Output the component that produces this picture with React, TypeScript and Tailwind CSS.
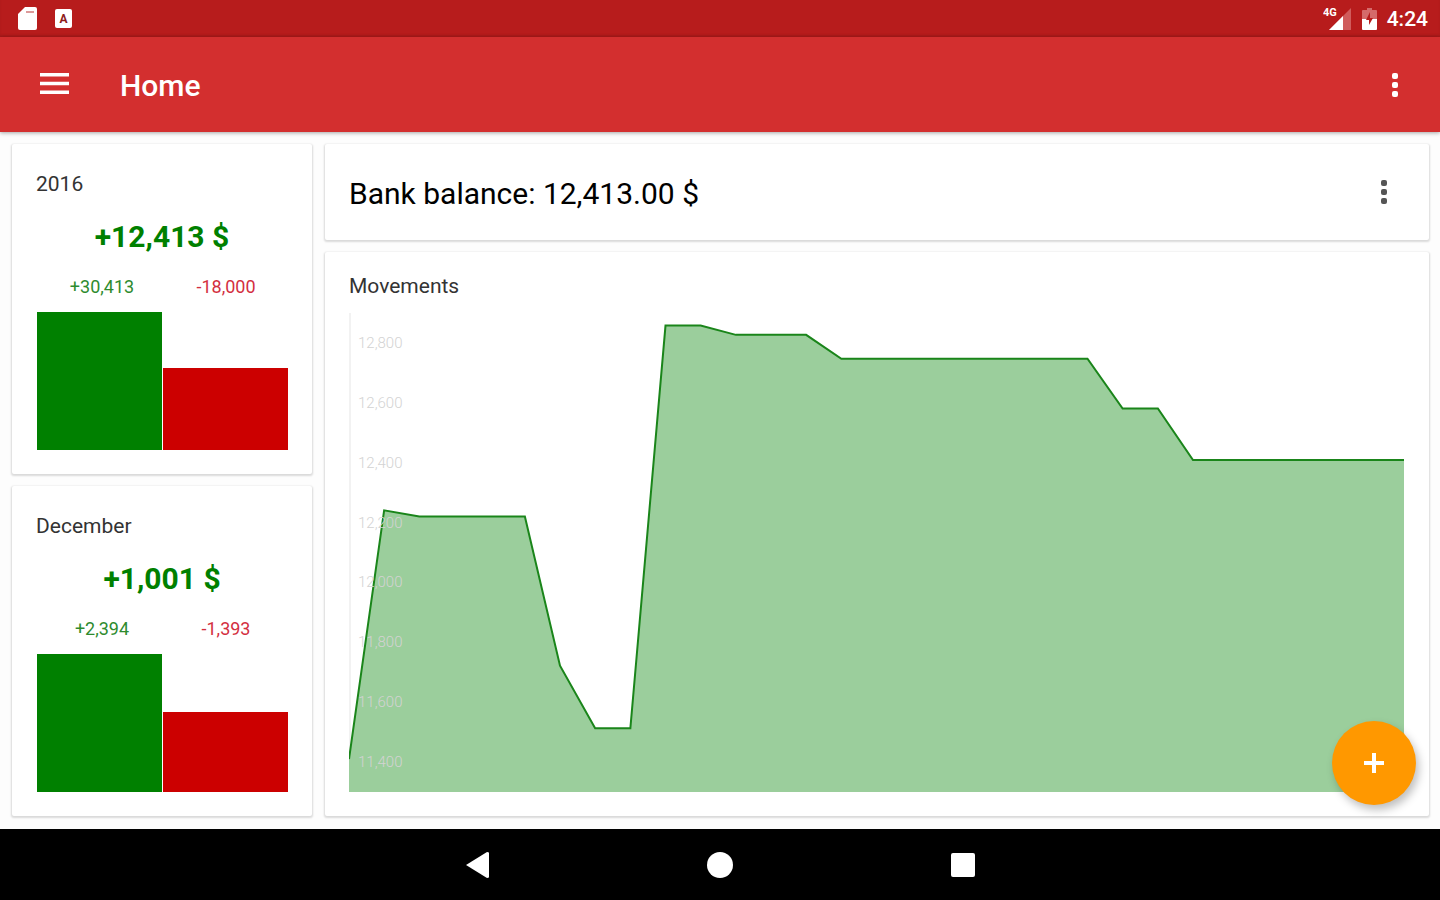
interface Summary {
  title: string;
  total: string;
  income: { label: string; value: number };
  expense: { label: string; value: number };
}

const SUMMARIES: Summary[] = [
  {
    title: "2016",
    total: "+12,413 $",
    income: { label: "+30,413", value: 30413 },
    expense: { label: "-18,000", value: 18000 },
  },
  {
    title: "December",
    total: "+1,001 $",
    income: { label: "+2,394", value: 2394 },
    expense: { label: "-1,393", value: 1393 },
  },
];

// one balance per day of the month
const BALANCES = [
  11410, 12241, 12220, 12220, 12220, 12220, 11722, 11513, 11513, 12858, 12858,
  12827, 12827, 12827, 12747, 12747, 12747, 12747, 12747, 12747, 12747, 12747,
  12581, 12581, 12409, 12409, 12409, 12409, 12409, 12409, 12409,
];

const AXIS_MIN = 11300;
const AXIS_MAX = 12900;
const AXIS_LABELS = ["12,800", "12,600", "12,400", "12,200", "12,000", "11,800", "11,600", "11,400"];

const CARD = "flex flex-col rounded-xs bg-white shadow-[0_1px_2px_1px_rgba(0,0,0,0.14)]";

function StatusBar() {
  return (
    <div className="flex h-[37px] items-center justify-between bg-[#b71c1c] pr-3 pl-[18px] text-white shadow-[inset_0_-2px_2px_rgba(0,0,0,0.08)]">
      <div className="flex items-center gap-[18px]">
        <svg width="19" height="23" viewBox="0 0 19 23" aria-hidden="true">
          <path d="M7 0H17Q19 0 19 2V21Q19 23 17 23H2Q0 23 0 21V7Z" fill="#fff" />
          <path d="M8 4H16V6H8Z" fill="#dc9a9a" />
        </svg>
        <svg width="17" height="19" viewBox="0 0 17 19" aria-hidden="true">
          <rect width="17" height="19" rx="2" fill="#fff" />
          <text x="8.5" y="14" textAnchor="middle" fontSize="12" fontWeight="700" fill="#8e1b1b">A</text>
        </svg>
      </div>
      <div className="flex items-center">
        <svg width="28" height="23" viewBox="0 0 28 23" aria-hidden="true">
          <path d="M28 1V23H6Z" fill="#d05c5c" />
          <path d="M20 9V23H6Z" fill="#fff" />
          <text x="0" y="9" fontSize="11" fontWeight="700" fill="#fff">4G</text>
        </svg>
        <svg className="ml-[11px]" width="15" height="22" viewBox="0 0 15 22" aria-hidden="true">
          <path d="M5 0H10V2H14Q15 2 15 3V12H0V3Q0 2 1 2H5Z" fill="#d46b6b" />
          <path d="M0 11H15V21Q15 22 14 22H1Q0 22 0 21Z" fill="#fff" />
          <path d="M8 4L4 12H7V17L11 10H8Z" fill="#b71c1c" />
        </svg>
        <time className="ml-[10px] text-[21px] leading-6 font-medium">4:24</time>
      </div>
    </div>
  );
}

function DotsIcon() {
  return (
    <svg width="6" height="24" viewBox="0 0 6 24" fill="currentColor" aria-hidden="true">
      <rect width="6" height="6" rx="2" />
      <rect y="9" width="6" height="6" rx="2" />
      <rect y="18" width="6" height="6" rx="2" />
    </svg>
  );
}

function AppBar() {
  return (
    <header className="relative flex h-[95px] items-center bg-[#d32f2f] px-10 pt-0.5 text-white shadow-[0_1px_4px_rgba(0,0,0,0.35)]">
      <button type="button" aria-label="Open menu" className="pb-1">
        <svg width="29" height="21" viewBox="0 0 29 21" fill="currentColor" aria-hidden="true">
          <path d="M0 0H29V3.5H0ZM0 8.75H29V12.25H0ZM0 17.5H29V21H0Z" />
        </svg>
      </button>
      <h1 className="ml-[51px] flex-1 text-[30px] leading-9 font-medium">Home</h1>
      <button type="button" aria-label="More options" className="px-0.5 pb-0.5">
        <DotsIcon />
      </button>
    </header>
  );
}

function SummaryCard({ summary }: { summary: Summary }) {
  const { title, total, income, expense } = summary;
  const max = Math.max(income.value, expense.value);

  return (
    <section className={`${CARD} flex-1 px-6 pt-[26px] pb-6`}>
      <h2 className="text-[21px] leading-7 text-[#333]">{title}</h2>
      <p className="mt-[21px] text-center text-[30px] leading-9 font-bold text-[#008000]">{total}</p>
      <div className="mt-5 grid grid-cols-2 pl-1 text-center text-[18px] leading-6">
        <span className="text-[#2e8b2e]">{income.label}</span>
        <span className="text-[#d32f3f]">{expense.label}</span>
      </div>
      <div className="mt-[13px] flex min-h-24 flex-1 items-end gap-px pl-px">
        <div className="flex-1 bg-[#008000]" style={{ height: `${(income.value / max) * 100}%` }} />
        <div className="flex-1 bg-[#cc0000]" style={{ height: `${(expense.value / max) * 100}%` }} />
      </div>
    </section>
  );
}

function MovementsChart() {
  const points = BALANCES.map((balance, day) => {
    const x = (day / (BALANCES.length - 1)) * 1000;
    const y = ((AXIS_MAX - balance) / (AXIS_MAX - AXIS_MIN)) * 1000;
    return `${x.toFixed(1)},${y.toFixed(1)}`;
  }).join(" ");

  return (
    <div className="relative min-h-60 flex-1 border-l-2 border-[#f2f2f2]">
      <svg
        className="absolute inset-y-0 -left-0.5 h-full w-[calc(100%+2px)]"
        viewBox="0 0 1000 1000"
        preserveAspectRatio="none"
        role="img"
        aria-label="Balance over the month"
      >
        <polygon points={`0,1000 ${points} 1000,1000`} fill="#9bce9c" />
        <polyline points={points} fill="none" stroke="#1a851a" strokeWidth="2" vectorEffect="non-scaling-stroke" />
      </svg>
      <div className="absolute inset-y-0 left-[7px] flex flex-col text-[15px] leading-5 font-light text-[#d3d3d3]">
        {AXIS_LABELS.map((label) => (
          <span key={label} className="flex flex-1 items-center">{label}</span>
        ))}
      </div>
    </div>
  );
}

function NavBar() {
  return (
    <nav className="flex h-[71px] justify-center bg-black text-white">
      <button type="button" aria-label="Back" className="flex w-[243px] items-center justify-center">
        <svg width="23" height="26" viewBox="0 0 23 26" fill="currentColor" aria-hidden="true">
          <path d="M0 13L21 0Q23 0 23 1V25Q23 26 21 26Z" />
        </svg>
      </button>
      <button type="button" aria-label="Home" className="flex w-[243px] items-center justify-center">
        <span className="size-[26px] rounded-full bg-white" />
      </button>
      <button type="button" aria-label="Recent apps" className="flex w-[243px] items-center justify-center">
        <span className="size-6 rounded-xs bg-white" />
      </button>
    </nav>
  );
}

export default function App() {
  return (
    <div className="flex min-h-screen flex-col bg-[#fdfdfd] font-[Roboto,sans-serif]">
      <StatusBar />
      <AppBar />
      <main className="relative flex flex-1 gap-[13px] pt-3 pr-[11px] pb-[13px] pl-3">
        <div className="flex w-[300px] shrink-0 flex-col gap-3">
          {SUMMARIES.map((summary) => (
            <SummaryCard key={summary.title} summary={summary} />
          ))}
        </div>
        <div className="flex min-w-0 flex-1 flex-col gap-3">
          <section className={`${CARD} h-24`}>
            <div className="flex flex-1 items-center justify-between pt-1 pr-[42px] pl-6">
              <h2 className="text-[30px] leading-9 text-black">Bank balance: 12,413.00 $</h2>
              <button type="button" aria-label="Balance options" className="pb-1 text-[#555]">
                <DotsIcon />
              </button>
            </div>
          </section>
          <section className={`${CARD} flex-1 pt-5 pr-[25px] pb-6 pl-6`}>
            <h2 className="mb-[13px] text-[21px] leading-7 text-[#333]">Movements</h2>
            <MovementsChart />
          </section>
        </div>
        <button
          type="button"
          aria-label="Add movement"
          className="absolute right-6 bottom-6 flex size-[84px] items-center justify-center rounded-full bg-[#ff9800] text-white shadow-[3px_5px_8px_rgba(0,0,0,0.25)]"
        >
          <svg width="20" height="20" viewBox="0 0 20 20" fill="currentColor" aria-hidden="true">
            <path d="M8 0H12V8H20V12H12V20H8V12H0V8H8Z" />
          </svg>
        </button>
      </main>
      <NavBar />
    </div>
  );
}
